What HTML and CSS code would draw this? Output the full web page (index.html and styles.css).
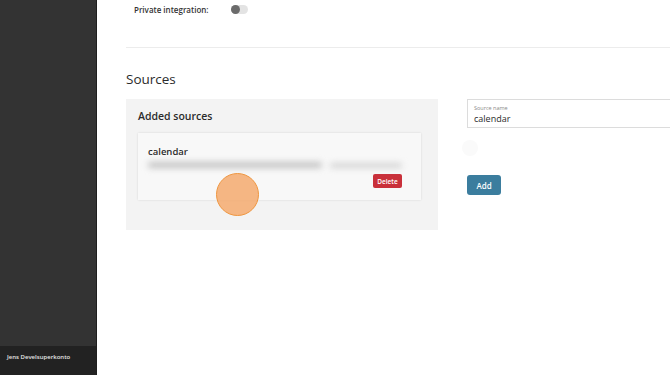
FILE: index.html
```html
<!DOCTYPE html>
<html>
<head>
<meta charset="utf-8">
<link rel="stylesheet" href="styles.css">
</head>
<body>
<div class="app">
  <aside class="sidebar">
    <div class="sidebar-top"></div>
    <div class="sidebar-user">Jens Develsuperkonto</div>
  </aside>
  <main class="main">
    <div class="row-private">
      <span class="label">Private integration:</span>
      <span class="toggle"><span class="knob"></span></span>
    </div>
    <hr class="sep">
    <h2 class="title">Sources</h2>
    <div class="sources">
      <section class="panel">
        <h3 class="panel-title">Added sources</h3>
        <div class="card">
          <div class="card-name">calendar</div>
          <div class="blur-line"><span class="b1"></span><span class="b2"></span></div>
          <div class="card-actions"><button class="btn-delete">Delete</button></div>
        </div>
      </section>
      <section class="form">
        <div class="field">
          <div class="field-label">Source name</div>
          <div class="field-value">calendar</div>
        </div>
        <div class="ghost"></div>
        <button class="btn-add">Add</button>
      </section>
    </div>
    <div class="click-dot"></div>
  </main>
</div>
</body>
</html>
```
FILE: styles.css
```css
* { box-sizing: border-box; }
html, body { margin: 0; padding: 0; }
body {
  font-family: "Open Sans", "Noto Sans", sans-serif;
  color: #2b2b2b;
  background: #fff;
  width: 670px;
  height: 375px;
  overflow: hidden;
}
.app { display: flex; height: 375px; }
.sidebar {
  width: 97px;
  flex: none;
  display: flex;
  flex-direction: column;
  border-right: 1px solid #1e1e1e;
}
.sidebar-top { flex: 1; background: #333333; }
.sidebar-user {
  height: 29px;
  background: #222222;
  color: #e6e6e6;
  font-size: 6px;
  font-weight: 600;
  padding: 7px 0 0 7px;
}
.main {
  flex: 1;
  position: relative;
  padding: 0 0 0 29px;
}
.row-private {
  display: flex;
  align-items: center;
  height: 18px;
  padding-left: 8px;
}
.label { font-size: 8px; font-weight: 600; color: #333; width: 97px; }
.toggle {
  width: 17px; height: 9px; border-radius: 5px;
  background: #e3e3e3;
  position: relative;
}
.knob {
  position: absolute; left: 0; top: 0;
  width: 9px; height: 9px; border-radius: 50%;
  background: #6b6b6b;
}
.sep {
  border: 0; border-top: 1px solid #ececec;
  margin: 29px 0 0 0;
}
.title {
  font-size: 13.5px; font-weight: 500; margin: 22px 0 0 0;
  line-height: 18px; color: #2b2b2b;
}
.sources { display: flex; margin-top: 11px; }
.panel {
  width: 312px; height: 131px;
  background: #f3f3f3;
  padding: 10px 17px 0 12px;
}
.panel-title { font-size: 10.5px; font-weight: 600; margin: 0; line-height: 15px; color: #2b2b2b; }
.card {
  margin-top: 9px;
  height: 67px;
  background: #f8f8f8;
  box-shadow: 0 0 2px rgba(0,0,0,0.12);
  padding: 12px 19px 0 10px;
}
.card-name { font-size: 9.5px; font-weight: 600; line-height: 13px; color: #2b2b2b; }
.blur-line { display: flex; gap: 8px; margin-top: 2px; height: 10px; align-items: center; }
.b1 { width: 174px; height: 6px; background: #c2c2c2; filter: blur(3px); border-radius: 3px; }
.b2 { width: 72px; height: 5px; background: #d2d2d2; filter: blur(3px); border-radius: 3px; }
.card-actions { display: flex; justify-content: flex-end; margin-top: 4px; }
.btn-delete {
  font-family: inherit; font-size: 6.5px; font-weight: 600;
  color: #fff; background: #c9303a; border: 0; border-radius: 2px;
  width: 29px; height: 14px; padding: 0;
}
.form { margin-left: 29px; width: 210px; }
.field {
  height: 29px; border: 1px solid #dcdcdc; border-right: 0;
  padding: 5px 0 0 6px; background: #fff;
}
.field-label { font-size: 5.5px; color: #8a8a8a; line-height: 7px; }
.field-value { font-size: 9px; color: #2b2b2b; line-height: 13px; }
.ghost {
  width: 16px; height: 16px; border-radius: 50%;
  background: #fafafa; margin: 12px 0 0 -5px;
}
.btn-add {
  margin-top: 19px;
  font-family: inherit; font-size: 8px; font-weight: 600;
  color: #fff; background: #3b7d9e; border: 0; border-radius: 3px;
  width: 34px; height: 20px; padding: 0;
}
.click-dot {
  position: absolute; left: 119px; top: 173px;
  width: 43px; height: 43px; border-radius: 50%;
  background: rgba(245, 170, 110, 0.85);
  border: 1.5px solid #ef9640;
}
```
